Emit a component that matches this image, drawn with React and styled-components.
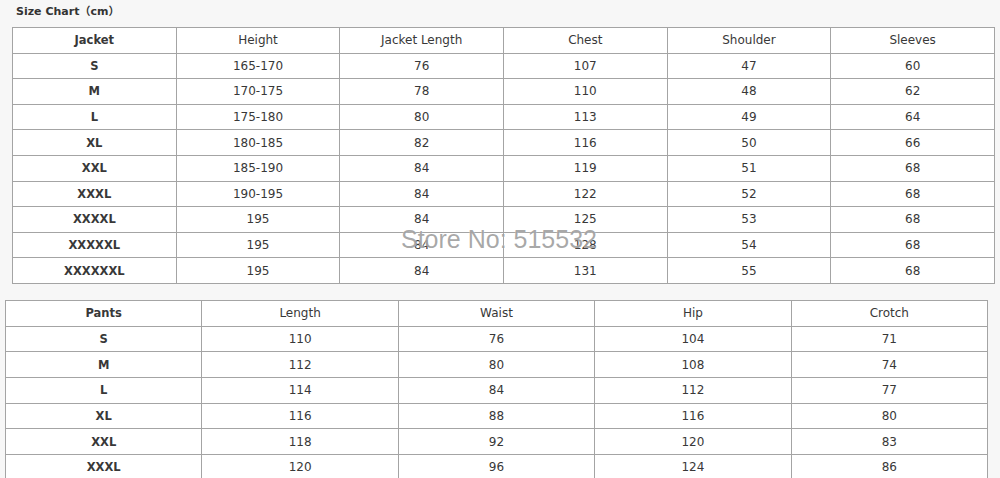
import React from "react";
import styled, { createGlobalStyle } from "styled-components";

const Global = createGlobalStyle`
  html, body { margin: 0; padding: 0; background: #f7f7f7; }
  body { font-family: "DejaVu Sans", Verdana, sans-serif; }
`;

const Page = styled.div`
  position: relative;
  width: 1000px;
  height: 478px;
  overflow: hidden;
  background: #f7f7f7;
  display: flex;
  flex-direction: column;
`;

const Title = styled.div`
  flex: none;
  height: 27px;
  padding-left: 16px;
  box-sizing: border-box;
  padding-top: 5px;
  font-family: "DejaVu Sans", "Noto Sans CJK SC", sans-serif;
  font-size: 11px;
  font-weight: bold;
  color: #333;
  line-height: 14px;
`;

const Table = styled.table`
  border-collapse: collapse;
  table-layout: fixed;
  background: #fff;
  margin-left: ${(p) => p.$left}px;
  margin-top: ${(p) => p.$top || 0}px;
  width: ${(p) => p.$width}px;
  flex: none;
`;

const Row = styled.tr`
  height: ${(p) => p.$h}px;
`;

const Cell = styled.td`
  border: 1px solid #a4a4a4;
  padding: 0;
  text-align: center;
  vertical-align: middle;
  font-family: "DejaVu Sans", Verdana, sans-serif;
  font-size: ${(p) => (p.$bold ? "11.5px" : "12px")};
  color: #383838;
  font-weight: ${(p) => (p.$bold ? "bold" : "normal")};
  line-height: 14px;
`;

const Watermark = styled.div`
  position: absolute;
  left: 401px;
  top: 225px;
  font-family: "Liberation Sans", Arial, sans-serif;
  font-size: 25px;
  color: rgba(140, 140, 140, 0.75);
  text-shadow: 0 0 1px rgba(255, 255, 255, 0.8);
  white-space: nowrap;
  pointer-events: none;
`;

const jacketHead = ["Jacket", "Height", "Jacket Length", "Chest", "Shoulder", "Sleeves"];
const jacketRows = [
  ["S", "165-170", "76", "107", "47", "60"],
  ["M", "170-175", "78", "110", "48", "62"],
  ["L", "175-180", "80", "113", "49", "64"],
  ["XL", "180-185", "82", "116", "50", "66"],
  ["XXL", "185-190", "84", "119", "51", "68"],
  ["XXXL", "190-195", "84", "122", "52", "68"],
  ["XXXXL", "195", "84", "125", "53", "68"],
  ["XXXXXL", "195", "84", "128", "54", "68"],
  ["XXXXXXL", "195", "84", "131", "55", "68"],
];

const pantsHead = ["Pants", "Length", "Waist", "Hip", "Crotch"];
const pantsRows = [
  ["S", "110", "76", "104", "71"],
  ["M", "112", "80", "108", "74"],
  ["L", "114", "84", "112", "77"],
  ["XL", "116", "88", "116", "80"],
  ["XXL", "118", "92", "120", "83"],
  ["XXXL", "120", "96", "124", "86"],
];

function SizeTable({ head, rows, left, top, width, rowH }) {
  return (
    <Table $left={left} $top={top} $width={width}>
      <tbody>
        <Row $h={rowH}>
          {head.map((h, i) => (
            <Cell key={i} $bold={i === 0}>{h}</Cell>
          ))}
        </Row>
        {rows.map((r, ri) => (
          <Row key={ri} $h={rowH}>
            {r.map((c, ci) => (
              <Cell key={ci} $bold={ci === 0}>{c}</Cell>
            ))}
          </Row>
        ))}
      </tbody>
    </Table>
  );
}

export default function App() {
  return (
    <>
      <Global />
      <Page>
        <Title>Size Chart（cm）</Title>
        <SizeTable head={jacketHead} rows={jacketRows} left={12} width={983} rowH={25.6} />
        <SizeTable head={pantsHead} rows={pantsRows} left={5} top={16} width={983} rowH={25.7} />
        <Watermark>Store No: 515532</Watermark>
      </Page>
    </>
  );
}
